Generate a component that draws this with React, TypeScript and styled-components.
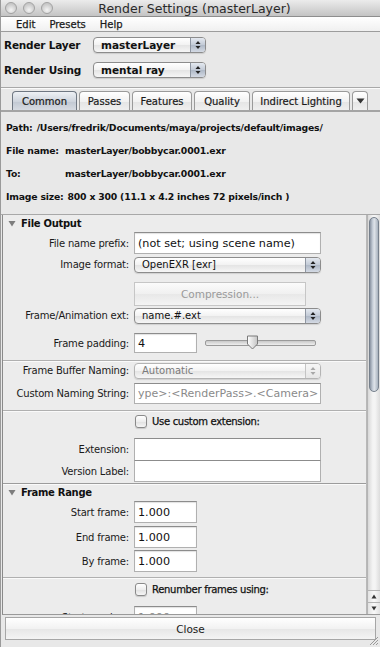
import React from "react";
import styled, { createGlobalStyle } from "styled-components";

const GlobalStyle = createGlobalStyle`
  html, body {
    margin: 0;
    padding: 0;
    background: #e8e8e8;
  }
  body {
    font-family: "DejaVu Sans", "Liberation Sans", sans-serif;
    color: #111;
  }
`;

const LABEL_W = 128;

const Window = styled.div`
  width: 380px;
  height: 647px;
  display: flex;
  flex-direction: column;
  background: #e8e8e8;
  overflow: hidden;
  box-sizing: border-box;
  border-left: 1px solid #9a9a9a;
`;

const TitleBar = styled.div`
  height: 17px;
  box-sizing: border-box;
  flex: none;
  position: relative;
  display: flex;
  align-items: center;
  justify-content: center;
  background: linear-gradient(#ececec, #c4c4c4);
  border-bottom: 1px solid #8e8e8e;
`;

const Lights = styled.div`
  position: absolute;
  left: 4px;
  top: 2px;
  display: flex;
  gap: 6px;
`;

const Light = styled.span`
  width: 12px;
  height: 12px;
  border-radius: 50%;
  box-sizing: border-box;
  border: 1px solid #a2a2a2;
  background: radial-gradient(circle at 50% 70%, #f4f4f4, #c8c8c8 70%);
`;

const Title = styled.div`
  font-size: 12.5px;
  color: #2a2a2a;
  padding-left: 8px;
`;

const MenuBar = styled.div`
  height: 15px;
  box-sizing: border-box;
  flex: none;
  display: flex;
  align-items: center;
  padding-left: 15px;
  gap: 14px;
  background: linear-gradient(#ffffff, #f0f0f0);
  border-bottom: 1px solid #9c9c9c;
`;

const MenuItem = styled.span`
  font-size: 10px;
  color: #1a1a1a;
  -webkit-text-stroke: 0.25px #1a1a1a;
`;

const TopForm = styled.div`
  flex: none;
  box-sizing: border-box;
  padding: 5px 0 0 3px;
  height: 56px;
  display: flex;
  flex-direction: column;
  gap: 9px;
  border-bottom: 1px solid #a8a8a8;
  box-shadow: 0 1px 0 #fafafa;
`;

const TopRow = styled.div`
  display: grid;
  grid-template-columns: 89px 113px;
  align-items: center;
  height: 16px;
`;

const TopLabel = styled.span`
  font-size: 10.5px;
  font-weight: bold;
  letter-spacing: -0.2px;
`;

const PopUpBox = styled.div<{ $disabled?: boolean }>`
  height: 16px;
  box-sizing: border-box;
  display: flex;
  align-items: center;
  border: 1px solid ${(p) => (p.$disabled ? "#b4b4b4" : "#8c8c8c")};
  border-radius: 4px;
  background: linear-gradient(#ffffff, #f2f2f2 50%, #e4e4e4 51%, #f6f6f6);
  box-shadow: 0 1px 1px rgba(0, 0, 0, 0.12);
  overflow: hidden;
`;

const PopUpText = styled.span<{ $disabled?: boolean; $bold?: boolean }>`
  flex: 1;
  padding-left: 7px;
  font-size: ${(p) => (p.$bold ? "10.5px" : "10px")};
  font-weight: ${(p) => (p.$bold ? "bold" : "normal")};
  color: ${(p) => (p.$disabled ? "#7a7a7a" : "#111")};
  white-space: nowrap;
`;

const Stepper = styled.span<{ $disabled?: boolean }>`
  width: 14px;
  height: 100%;
  display: flex;
  align-items: center;
  justify-content: center;
  border-left: 1px solid ${(p) => (p.$disabled ? "#c4c4c4" : "#8e96a2")};
  background: ${(p) =>
    p.$disabled
      ? "linear-gradient(#f6f6f6, #e6e6e6)"
      : "linear-gradient(#e4e9f0, #c2cad6 50%, #aeb8c6 51%, #d4dae4)"};
`;

function StepperArrows({ disabled }: { disabled?: boolean }) {
  const c = disabled ? "#a8a8a8" : "#222";
  return (
    <svg width="6" height="10" viewBox="0 0 6 10">
      <path d="M3 1 L5.5 4 H0.5 Z" fill={c} />
      <path d="M3 9 L5.5 6 H0.5 Z" fill={c} />
    </svg>
  );
}

function PopUp({
  text,
  disabled,
  bold,
}: {
  text: string;
  disabled?: boolean;
  bold?: boolean;
}) {
  return (
    <PopUpBox $disabled={disabled}>
      <PopUpText $disabled={disabled} $bold={bold}>
        {text}
      </PopUpText>
      <Stepper $disabled={disabled}>
        <StepperArrows disabled={disabled} />
      </Stepper>
    </PopUpBox>
  );
}

const TabBar = styled.div`
  flex: none;
  height: 24px;
  box-sizing: border-box;
  display: flex;
  align-items: flex-end;
  padding: 3px 0 0 11px;
  gap: 2px;
  border-bottom: 2px solid #a4a4a4;
`;

const Tab = styled.div<{ $active?: boolean; $w: number }>`
  width: ${(p) => p.$w}px;
  height: 19px;
  box-sizing: border-box;
  display: flex;
  align-items: center;
  justify-content: center;
  font-size: 10px;
  color: #1a1a1a;
  -webkit-text-stroke: 0.2px #1a1a1a;
  border: 1px solid ${(p) => (p.$active ? "#6f7782" : "#9a9a9a")};
  border-bottom: none;
  border-radius: 4px 4px 0 0;
  background: ${(p) =>
    p.$active
      ? "linear-gradient(#eef1f5, #cdd3dc 55%, #c2c9d3 56%, #d6dbe2)"
      : "linear-gradient(#ffffff, #f1f1f1 55%, #e5e5e5 56%, #efefef)"};
`;

const InfoBlock = styled.div`
  flex: none;
  height: 103px;
  padding: 7px 0 0 5px;
  box-sizing: border-box;
  display: flex;
  flex-direction: column;
  gap: 7px;
  border-bottom: 1px solid #a8a8a8;
`;

const InfoLine = styled.div`
  display: flex;
  height: 16px;
  align-items: center;
  font-size: 9.3px;
  font-weight: bold;
  letter-spacing: -0.2px;
  white-space: nowrap;
`;

const InfoKey = styled.span<{ $w?: number }>`
  width: ${(p) => (p.$w ? `${p.$w}px` : "auto")};
  padding-right: ${(p) => (p.$w ? "0" : "4px")};
`;

const ScrollFrame = styled.div`
  flex: none;
  height: 400px;
  box-sizing: border-box;
  display: flex;
  border-left: 1px solid #8a8a8a;
  border-bottom: 1px solid #9a9a9a;
  margin-left: 1px;
  background: #ececec;
  overflow: hidden;
`;

const ScrollContent = styled.div`
  flex: 1;
  overflow: hidden;
  border-right: 1px solid #b8b8b8;
`;

const ScrollBar = styled.div`
  width: 12px;
  flex: none;
  display: flex;
  flex-direction: column;
  background: linear-gradient(90deg, #d8d8d8, #f4f4f4 40%, #f4f4f4 60%, #dcdcdc);
  border-left: 1px solid #b4b4b4;
`;

const Thumb = styled.div`
  margin: 2px 1px 0 1px;
  height: 175px;
  border-radius: 5px;
  border: 1px solid #76808c;
  box-sizing: border-box;
  background: linear-gradient(90deg, #8a94a2, #c8d0da 35%, #dde2e8 55%, #a8b2be);
`;

const TrackFill = styled.div`
  flex: 1;
`;

const ScrollArrow = styled.div`
  height: 11px;
  display: flex;
  align-items: center;
  justify-content: center;
  border-top: 1px solid #b4b4b4;
  background: linear-gradient(90deg, #e2e2e2, #fafafa 50%, #e2e2e2);
`;

const Section = styled.div`
  display: flex;
  flex-direction: column;
`;

const SectionHeader = styled.div<{ $mt?: number }>`
  height: 14px;
  display: flex;
  align-items: center;
  gap: 5px;
  padding-left: 5px;
  margin-top: ${(p) => p.$mt ?? 0}px;
  font-size: 10px;
  font-weight: bold;
  letter-spacing: -0.3px;
`;

const Divider = styled.div<{ $mt?: number; $heavy?: boolean }>`
  height: 0;
  border-top: 1px solid ${(p) => (p.$heavy ? "#9c9c9c" : "#b0b0b0")};
  border-bottom: 1px solid #fafafa;
  margin-top: ${(p) => p.$mt ?? 0}px;
`;

const FormRow = styled.div<{ $h: number; $mt?: number }>`
  display: grid;
  grid-template-columns: ${LABEL_W - 2}px 1fr;
  column-gap: 5px;
  align-items: center;
  height: ${(p) => p.$h}px;
  margin-top: ${(p) => p.$mt ?? 0}px;
  padding-right: 45px;
`;

const Label = styled.span`
  text-align: right;
  font-size: 10px;
  white-space: nowrap;
  color: #1a1a1a;
  letter-spacing: -0.2px;
`;

const TextField = styled.div<{
  $w?: number;
  $big?: boolean;
  $disabled?: boolean;
  $flat?: boolean;
}>`
  width: ${(p) => (p.$w ? `${p.$w}px` : "auto")};
  height: 100%;
  box-sizing: border-box;
  display: flex;
  align-items: center;
  padding-left: 3px;
  background: #ffffff;
  border: 1px solid #b0b0b0;
  border-top-color: #8c8c8c;
  box-shadow: ${(p) => (p.$flat ? "none" : "inset 0 1px 1px rgba(0,0,0,0.12)")};
  font-size: ${(p) => (p.$big ? "11.2px" : "11px")};
  color: ${(p) => (p.$disabled ? "#8a8a8a" : "#111")};
  white-space: nowrap;
  overflow: hidden;
`;

const DisabledButton = styled.div`
  height: 100%;
  margin-right: 15px;
  box-sizing: border-box;
  display: flex;
  align-items: center;
  justify-content: center;
  border: 1px solid #c6c6c6;
  background: linear-gradient(#fbfbfb, #f0f0f0 50%, #e8e8e8 51%, #f4f4f4);
  font-size: 10.5px;
  color: #9a9a9a;
`;

const SliderCell = styled.div`
  display: flex;
  align-items: center;
  gap: 8px;
  height: 100%;
`;

const SliderTrack = styled.div`
  position: relative;
  width: 109px;
  height: 4px;
  border-radius: 2px;
  border: 1px solid #9a9a9a;
  background: linear-gradient(#c8c8c8, #eeeeee);
`;

const SliderThumb = styled.div`
  position: absolute;
  left: 40px;
  top: -6px;
`;

const CheckRow = styled.div<{ $h: number; $mt?: number }>`
  display: flex;
  align-items: center;
  gap: 5px;
  height: ${(p) => p.$h}px;
  margin-top: ${(p) => p.$mt ?? 0}px;
  padding-left: ${LABEL_W + 4}px;
  font-size: 10px;
  letter-spacing: -0.3px;
  -webkit-text-stroke: 0.25px #111;
`;

const CheckBox = styled.span`
  width: 12px;
  height: 13px;
  box-sizing: border-box;
  border: 1px solid #8a8a8a;
  border-radius: 3px;
  background: linear-gradient(#ffffff, #eeeeee 50%, #e0e0e0 51%, #f6f6f6);
  box-shadow: 0 1px 1px rgba(0, 0, 0, 0.15);
`;

const Stack = styled.div<{ $mt?: number }>`
  display: flex;
  flex-direction: column;
  margin-top: ${(p) => p.$mt ?? 0}px;
`;

const Footer = styled.div`
  flex: 1;
  position: relative;
  padding: 2px 4px 0 4px;
`;

const CloseButton = styled.div`
  height: 23px;
  box-sizing: border-box;
  display: flex;
  align-items: center;
  justify-content: center;
  border: 1px solid #a6a6a6;
  background: linear-gradient(#ffffff, #f2f2f2 50%, #e6e6e6 51%, #f4f4f4);
  font-size: 10.5px;
  color: #1a1a1a;
`;

const Grip = styled.svg`
  position: absolute;
  right: 1px;
  bottom: 1px;
`;

function Triangle() {
  return (
    <svg width="8" height="7" viewBox="0 0 8 7">
      <path d="M0.5 1 H7.5 L4 6.5 Z" fill="#7d7d7d" />
    </svg>
  );
}

export default function App() {
  return (
    <>
      <GlobalStyle />
      <Window>
        <TitleBar>
          <Lights>
            <Light />
            <Light />
            <Light />
          </Lights>
          <Title>Render Settings (masterLayer)</Title>
        </TitleBar>

        <MenuBar>
          <MenuItem>Edit</MenuItem>
          <MenuItem>Presets</MenuItem>
          <MenuItem>Help</MenuItem>
        </MenuBar>

        <TopForm>
          <TopRow>
            <TopLabel>Render Layer</TopLabel>
            <PopUp text="masterLayer" bold />
          </TopRow>
          <TopRow>
            <TopLabel>Render Using</TopLabel>
            <PopUp text="mental ray" bold />
          </TopRow>
        </TopForm>

        <TabBar>
          <Tab $active $w={65}>Common</Tab>
          <Tab $w={51}>Passes</Tab>
          <Tab $w={60}>Features</Tab>
          <Tab $w={56}>Quality</Tab>
          <Tab $w={98}>Indirect Lighting</Tab>
          <Tab $w={16}>
            <svg width="9" height="6" viewBox="0 0 9 6">
              <path d="M0.5 0.5 H8.5 L4.5 5.5 Z" fill="#333" />
            </svg>
          </Tab>
        </TabBar>

        <InfoBlock>
          <InfoLine>
            <InfoKey>Path:</InfoKey>
            /Users/fredrik/Documents/maya/projects/default/images/
          </InfoLine>
          <InfoLine>
            <InfoKey $w={59}>File name:</InfoKey>
            masterLayer/bobbycar.0001.exr
          </InfoLine>
          <InfoLine>
            <InfoKey $w={59}>To:</InfoKey>
            masterLayer/bobbycar.0001.exr
          </InfoLine>
          <InfoLine>
            <InfoKey>Image size:</InfoKey>
            800 x 300 (11.1 x 4.2 inches 72 pixels/inch )
          </InfoLine>
        </InfoBlock>

        <ScrollFrame>
          <ScrollContent>
            <Section>
              <SectionHeader $mt={1}>
                <Triangle />
                File Output
              </SectionHeader>
              <FormRow $h={22} $mt={2}>
                <Label>File name prefix:</Label>
                <TextField $big>(not set; using scene name)</TextField>
              </FormRow>
              <FormRow $h={17} $mt={2}>
                <Label>Image format:</Label>
                <PopUp text="OpenEXR [exr]" />
              </FormRow>
              <FormRow $h={24} $mt={9}>
                <Label />
                <DisabledButton>Compression...</DisabledButton>
              </FormRow>
              <FormRow $h={17} $mt={1}>
                <Label>Frame/Animation ext:</Label>
                <PopUp text="name.#.ext" />
              </FormRow>
              <FormRow $h={20} $mt={9}>
                <Label>Frame padding:</Label>
                <SliderCell>
                  <TextField $w={63} $big>
                    4
                  </TextField>
                  <SliderTrack>
                    <SliderThumb>
                      <svg width="13" height="15" viewBox="0 0 13 15">
                        <defs>
                          <linearGradient id="thumbg" x1="0" x2="1">
                            <stop offset="0" stopColor="#ffffff" />
                            <stop offset="1" stopColor="#c4c4c4" />
                          </linearGradient>
                        </defs>
                        <path
                          d="M1.5 1 H11.5 V9 L6.5 14 L1.5 9 Z"
                          fill="url(#thumbg)"
                          stroke="#7a7a7a"
                          strokeWidth="1"
                        />
                      </svg>
                    </SliderThumb>
                  </SliderTrack>
                </SliderCell>
              </FormRow>
              <Divider $mt={7} />
              <FormRow $h={17}>
                <Label>Frame Buffer Naming:</Label>
                <PopUp text="Automatic" disabled />
              </FormRow>
              <FormRow $h={21} $mt={4}>
                <Label>Custom Naming String:</Label>
                <TextField $disabled $flat>
                  ype&gt;:&lt;RenderPass&gt;.&lt;Camera&gt;
                </TextField>
              </FormRow>
              <Divider $mt={6} />
              <CheckRow $h={14} $mt={2}>
                <CheckBox />
                Use custom extension:
              </CheckRow>
              <Stack $mt={10}>
                <FormRow $h={23}>
                  <Label>Extension:</Label>
                  <TextField $flat />
                </FormRow>
                <FormRow $h={22} $mt={-1}>
                  <Label>Version Label:</Label>
                  <TextField $flat />
                </FormRow>
              </Stack>
            </Section>
            <Divider $mt={1} $heavy />
            <Section>
              <SectionHeader>
                <Triangle />
                Frame Range
              </SectionHeader>
              <FormRow $h={22} $mt={2}>
                <Label>Start frame:</Label>
                <TextField $w={63} $big>
                  1.000
                </TextField>
              </FormRow>
              <FormRow $h={22} $mt={3}>
                <Label>End frame:</Label>
                <TextField $w={63} $big>
                  1.000
                </TextField>
              </FormRow>
              <FormRow $h={22} $mt={2}>
                <Label>By frame:</Label>
                <TextField $w={63} $big>
                  1.000
                </TextField>
              </FormRow>
              <Divider $mt={5} />
              <CheckRow $h={14} $mt={3}>
                <CheckBox />
                Renumber frames using:
              </CheckRow>
              <FormRow $h={22} $mt={10}>
                <Label>Start number:</Label>
                <TextField $w={63} $big $disabled>
                  1.000
                </TextField>
              </FormRow>
            </Section>
          </ScrollContent>
          <ScrollBar>
            <Thumb />
            <TrackFill />
            <ScrollArrow>
              <svg width="6" height="5" viewBox="0 0 6 5">
                <path d="M3 0.5 L5.5 4.5 H0.5 Z" fill="#333" />
              </svg>
            </ScrollArrow>
            <ScrollArrow>
              <svg width="6" height="5" viewBox="0 0 6 5">
                <path d="M3 4.5 L5.5 0.5 H0.5 Z" fill="#333" />
              </svg>
            </ScrollArrow>
          </ScrollBar>
        </ScrollFrame>

        <Footer>
          <CloseButton>Close</CloseButton>
          <Grip width="12" height="12" viewBox="0 0 12 12">
            <path d="M11 3 L3 11 M11 6 L6 11 M11 9 L9 11" stroke="#9a9a9a" strokeWidth="1" />
          </Grip>
        </Footer>
      </Window>
    </>
  );
}
